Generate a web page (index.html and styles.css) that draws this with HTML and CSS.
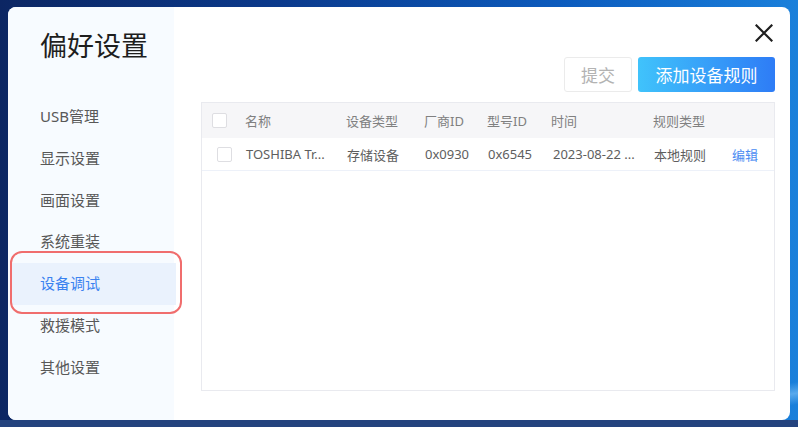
FILE: index.html
```html
<!DOCTYPE html>
<html lang="zh-CN">
<head>
    <meta charset="UTF-8">
    <meta name="viewport" content="width=device-width, initial-scale=1.0">
    <title>偏好设置</title>
    <link rel="stylesheet" href="styles.css">
</head>
<body>
    <div class="dialog">
        <aside class="side">
            <div class="side-title">偏好设置</div>
            <ul class="menu">
                <li>USB管理</li>
                <li>显示设置</li>
                <li>画面设置</li>
                <li>系统重装</li>
                <li class="active">设备调试</li>
                <li>救援模式</li>
                <li>其他设置</li>
            </ul>
            <!-- red annotation ring around the selected item -->
            <div class="mark"></div>
        </aside>

        <main class="main">
            <div class="close-row">
                <button class="close" title="关闭">
                    <svg width="18" height="18" viewBox="0 0 18 18">
                        <path d="M1.5 1.5 L16.5 16.5 M16.5 1.5 L1.5 16.5" stroke="#1f1f1f" stroke-width="2.2" stroke-linecap="square" fill="none"/>
                    </svg>
                </button>
            </div>

            <div class="actions">
                <button class="btn btn-plain">提交</button>
                <button class="btn btn-primary">添加设备规则</button>
            </div>

            <div class="table">
                <div class="tr th">
                    <div class="td td-check"><span class="check"></span></div>
                    <div class="td">名称</div>
                    <div class="td">设备类型</div>
                    <div class="td">厂商ID</div>
                    <div class="td">型号ID</div>
                    <div class="td">时间</div>
                    <div class="td">规则类型</div>
                    <div class="td"></div>
                </div>
                <div class="tr">
                    <div class="td td-check"><span class="check"></span></div>
                    <div class="td" title="TOSHIBA TransMemory">TOSHIBA Tr...</div>
                    <div class="td">存储设备</div>
                    <div class="td">0x0930</div>
                    <div class="td">0x6545</div>
                    <div class="td td-time" title="2023-08-22 14:36:52">2023-08-22 ...</div>
                    <div class="td">本地规则</div>
                    <div class="td"><a class="link">编辑</a></div>
                </div>
            </div>
        </main>
    </div>
</body>
</html>
```

FILE: styles.css
```css
* {
    box-sizing: border-box;
}
html, body {
    height: 100%;
}
body {
    margin: 0;
    padding: 7px 0 0 8px;
    overflow: hidden;
    font-family: "Noto Sans", "Noto Sans CJK SC", sans-serif;
    background:
        linear-gradient(to top, #24437e 0, #24437e 7px, rgba(36, 67, 126, 0) 7px),
        linear-gradient(170deg, rgba(255, 255, 255, 0) 0, rgba(255, 255, 255, 0) 92%, rgba(150, 210, 255, .5) 94%, rgba(255, 255, 255, 0) 96%),
        linear-gradient(90deg, #0c2663 0%, #0b3a8c 35%, #0c5bbd 70%, #1a80db 100%);
}

.dialog {
    display: flex;
    width: 782px;
    height: 413px;
    background: #fff;
    border-radius: 8px;
    overflow: hidden;
}

/* left menu */
.side {
    position: relative;
    width: 166px;
    flex-shrink: 0;
    padding-top: 24px;
    background: #f7fbff;
}
.side-title {
    padding-left: 32px;
    font-size: 27px;
    line-height: 28px;
    color: #1e1e1e;
    font-family: "Noto Sans CJK SC", sans-serif;
}
.menu {
    list-style: none;
    margin: 37px 0 0;
    padding: 0;
}
.menu li {
    height: 41.8px;
    line-height: 41.8px;
    margin: 0 -2px 0 3px;
    padding-left: 29px;
    font-size: 15px;
    color: #585858;
}
.menu li.active {
    background: #eaf2fd;
    color: #3b82f0;
}
.mark {
    position: absolute;
    left: 2px;
    top: 244px;
    width: 172px;
    height: 63px;
    border: 2px solid #f06d6d;
    border-radius: 12px;
}

/* right panel */
.main {
    flex: 1;
    padding: 0 15px 0 27px;
}
.close-row {
    display: flex;
    justify-content: flex-end;
    height: 18px;
    margin-top: 17px;
}
.close {
    width: 18px;
    height: 18px;
    margin-right: 2px;
    padding: 0;
    border: 0;
    background: none;
}
.close svg {
    display: block;
}
.actions {
    display: flex;
    justify-content: flex-end;
    gap: 6px;
    margin-top: 15px;
}
.btn {
    height: 35px;
    padding: 0;
    border-radius: 3px;
    font-family: "Noto Sans CJK SC", sans-serif;
    font-size: 17px;
}
.btn-plain {
    width: 68px;
    border: 1px solid #ebebeb;
    background: #fff;
    color: #b3b3b3;
}
.btn-primary {
    width: 137px;
    border: 0;
    background: linear-gradient(90deg, #40c3fb, #2e7cf6);
    color: #fff;
}

.table {
    height: 289px;
    margin-top: 10px;
    border: 1px solid #e9eaef;
}
.tr {
    display: grid;
    grid-template-columns: 43px 101px 78px 63px 64px 102px 78px 1fr;
    align-items: center;
    height: 33px;
    border-bottom: 1px solid #edf1f9;
    font-size: 13px;
    color: #5e5e5e;
}
.tr.th {
    height: 35px;
    border-bottom: 0;
    background: #f6f6f8;
    color: #808080;
}
.td {
    white-space: nowrap;
}
.tr:not(.th) .td {
    padding-left: 1px;
}
.tr:not(.th) .td-time {
    padding-left: 2px;
}
.td-check {
    display: flex;
    padding-left: 10px;
}
.tr:not(.th) .td-check {
    padding-left: 15px;
}
.check {
    width: 15px;
    height: 15px;
    border: 1px solid #dedee2;
    border-radius: 2px;
    background: #fff;
}
.link {
    color: #4a8cf2;
    cursor: pointer;
}
```
